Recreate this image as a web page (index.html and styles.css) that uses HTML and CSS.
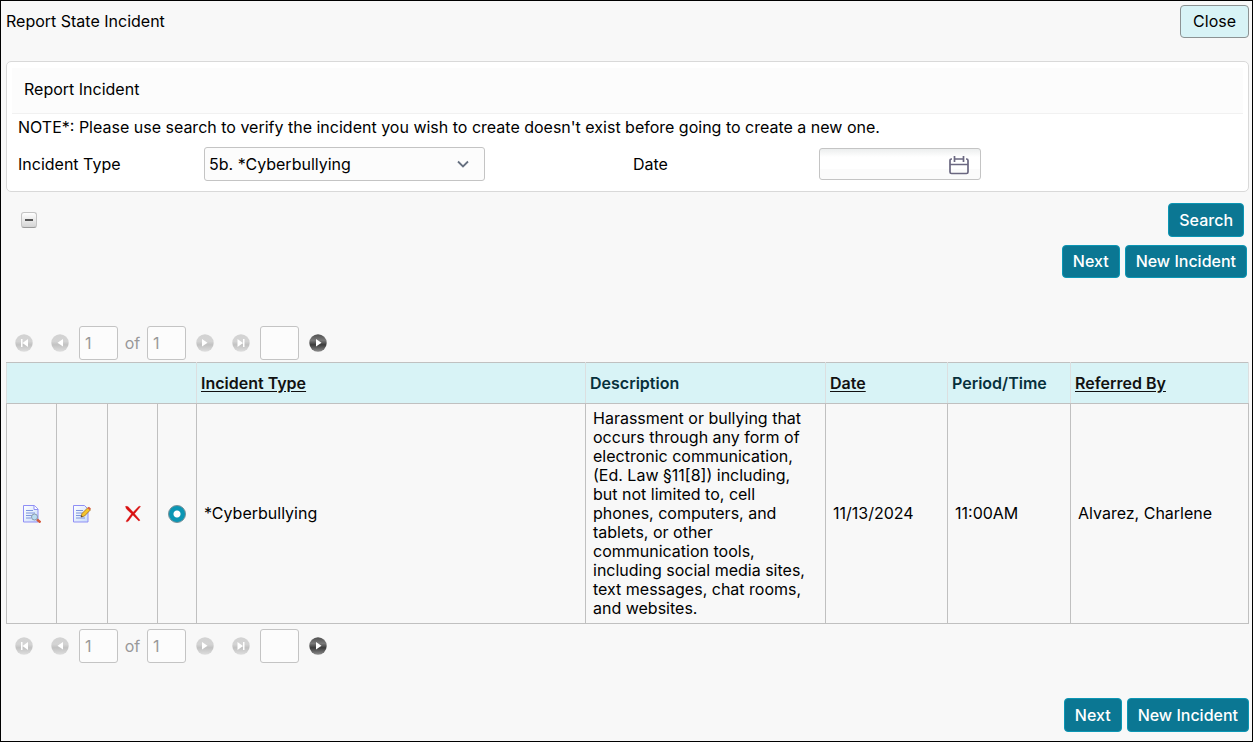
FILE: index.html
```html
<!DOCTYPE html>
<html lang="en">
<head>
<meta charset="utf-8">
<title>Report State Incident</title>
<link rel="stylesheet" href="styles.css">
</head>
<body>
<svg class="defs" aria-hidden="true">
  <defs>
    <linearGradient id="pale" x1="0" y1="0" x2="0" y2="1"><stop offset="0" stop-color="#d2d2d2"/><stop offset=".4" stop-color="#d4d4d4"/><stop offset=".6" stop-color="#c2c2c2"/><stop offset="1" stop-color="#dedede"/></linearGradient>
    <linearGradient id="dark" x1="0" y1="0" x2="0" y2="1"><stop offset="0" stop-color="#505050"/><stop offset=".35" stop-color="#7a7a7a"/><stop offset=".6" stop-color="#3c3c3c"/><stop offset="1" stop-color="#8c8c8c"/></linearGradient>
    <linearGradient id="sheet" x1="0" y1="0" x2="1" y2="1"><stop offset="0" stop-color="#fff"/><stop offset="1" stop-color="#c9dcfb"/></linearGradient>
    <symbol id="first" viewBox="0 0 18 18"><circle cx="9" cy="9" r="8.7" fill="url(#pale)"/><path d="M6 5h1.500v8H6zM13 5v8L7.500 9z" fill="#fff"/></symbol>
    <symbol id="prev" viewBox="0 0 18 18"><circle cx="9" cy="9" r="8.7" fill="url(#pale)"/><path d="M12 5v7.500L6.500 8.800z" fill="#fff"/></symbol>
    <symbol id="next" viewBox="0 0 18 18"><circle cx="9" cy="9" r="8.7" fill="url(#pale)"/><path d="M6 5v7.500L11.500 8.800z" fill="#fff"/></symbol>
    <symbol id="last" viewBox="0 0 18 18"><circle cx="9" cy="9" r="8.7" fill="url(#pale)"/><path d="M11 5h1.500v8H11zM5.500 5v8L11 9z" fill="#fff"/></symbol>
    <symbol id="go" viewBox="0 0 18 18"><circle cx="9" cy="9" r="8.7" fill="url(#dark)"/><path d="M7 5v7.500L12.500 8.800z" fill="#fff"/></symbol>
  </defs>
</svg>
<main class="page">
  <header class="top">
    <h1 class="title">Report State Incident</h1>
    <button class="btn btn-light" type="button">Close</button>
  </header>

  <section class="panel">
    <h2 class="panel-title">Report Incident</h2>
    <p class="note">NOTE*: Please use search to verify the incident you wish to create doesn't exist before going to create a new one.</p>
    <div class="fields">
      <label for="type">Incident Type</label>
      <div class="select-wrap">
        <select id="type" class="select"><option>5b. *Cyberbullying</option></select>
        <svg class="chevron" viewBox="0 0 12 8" aria-hidden="true"><path d="M1 1.500l5 5 5-5" fill="none" stroke="#667080" stroke-width="1.800"/></svg>
      </div>
      <label for="date">Date</label>
      <div class="date-wrap">
        <input id="date" class="date" type="text">
        <svg class="calendar" viewBox="0 0 20 20" aria-hidden="true"><path d="M3 4H2.500a1.500 1.500 0 0 0-1.500 1.500v11.500A1.500 1.500 0 0 0 2.500 18.500h15a1.500 1.500 0 0 0 1.500-1.500v-11.500A1.500 1.500 0 0 0 17.500 4h-.5M5.500 1v6M14.500 1v6M5.500 4h9M1.500 9.500h17" fill="none" stroke="#6a6780" stroke-width="1.700"/></svg>
      </div>
    </div>
  </section>

  <div class="search-row">
    <button class="collapse" type="button" aria-label="Collapse"></button>
    <button class="btn btn-tall" type="button">Search</button>
  </div>
  <div class="actions">
    <button class="btn" type="button">Next</button>
    <button class="btn" type="button">New Incident</button>
  </div>

  <nav class="pager" aria-label="Pages, top">
    <button class="icon-btn" type="button" aria-label="First page"><svg><use href="#first"/></svg></button>
    <button class="icon-btn" type="button" aria-label="Previous page"><svg><use href="#prev"/></svg></button>
    <span class="count"><input class="num" type="text" value="1" aria-label="Current page" disabled><span class="of">of</span><input class="num" type="text" value="1" aria-label="Page count" disabled></span>
    <button class="icon-btn" type="button" aria-label="Next page"><svg><use href="#next"/></svg></button>
    <button class="icon-btn" type="button" aria-label="Last page"><svg><use href="#last"/></svg></button>
    <input class="num" type="text" aria-label="Go to page">
    <button class="icon-btn" type="button" aria-label="Go"><svg><use href="#go"/></svg></button>
  </nav>

  <table class="grid">
    <colgroup><col class="c-view"><col class="c-edit"><col class="c-delete"><col class="c-radio"><col><col class="c-desc"><col class="c-date"><col class="c-time"><col class="c-ref"></colgroup>
    <thead>
      <tr><th colspan="4"></th><th><a href="#">Incident Type</a></th><th>Description</th><th><a href="#">Date</a></th><th>Period/Time</th><th><a href="#">Referred By</a></th></tr>
    </thead>
    <tbody>
      <tr>
        <td class="tool"><button class="icon-btn" type="button" aria-label="View"><svg viewBox="0 0 18 18"><path d="M.5 .5h11l3.500 3.500v13H.5z" fill="url(#sheet)" stroke="#8f8ff5"/><path d="M11 .5v4h4" fill="#fff" stroke="#8f8ff5"/><path d="M3 5.500h7M3 8h9M3 10.500h6M3 13h5" stroke="#7f96dc"/><circle cx="11.500" cy="12" r="3" fill="#b9dcf2" stroke="#8b9aab"/><path d="M14 14.500l3.500 3" stroke="#d4583c" stroke-width="2.400"/></svg></button></td>
        <td class="tool"><button class="icon-btn" type="button" aria-label="Edit"><svg viewBox="0 0 18 18"><path d="M.5 .5h11l3.500 3.500v13H.5z" fill="url(#sheet)" stroke="#8f8ff5"/><path d="M3 5.500h7M3 8h7M3 10.500h5M3 13h9" stroke="#7f96dc"/><path d="M8 12l1-3.500 6-6 2.500 2.300-6 6.200z" fill="#f5c52c" stroke="#a36b1c" stroke-width=".8"/><path d="M14.500 3l1.500-1.300 2 2L16.500 5z" fill="#d65a48"/><path d="M8 12l.5-1.700 1.200 1.200z" fill="#333"/></svg></button></td>
        <td class="tool"><button class="icon-btn" type="button" aria-label="Delete"><svg viewBox="0 0 18 18"><path d="M1.500 1.500c2-.5 3 .5 4 1.700l3.700 4 5.800-6 1.500.3-6 7.200 5.500 6.500-1.200.8-6-6-4.300 6c-1 1-2 1-2.500.3l5.500-7.600-5-4.700z" fill="#d90f0f" stroke="#d90f0f" stroke-width=".4"/></svg></button></td>
        <td class="tool"><input class="radio" type="radio" name="incident" aria-label="Select incident" checked></td>
        <td>*Cyberbullying</td>
        <td>Harassment or bullying that occurs through any form of electronic communication, (Ed. Law §11[8]) including, but not limited to, cell phones, computers, and tablets, or other communication tools, including social media sites, text messages, chat rooms, and websites.</td>
        <td>11/13/2024</td>
        <td>11:00AM</td>
        <td>Alvarez, Charlene</td>
      </tr>
    </tbody>
  </table>

  <nav class="pager pager-bottom" aria-label="Pages, bottom">
    <button class="icon-btn" type="button" aria-label="First page"><svg><use href="#first"/></svg></button>
    <button class="icon-btn" type="button" aria-label="Previous page"><svg><use href="#prev"/></svg></button>
    <span class="count"><input class="num" type="text" value="1" aria-label="Current page" disabled><span class="of">of</span><input class="num" type="text" value="1" aria-label="Page count" disabled></span>
    <button class="icon-btn" type="button" aria-label="Next page"><svg><use href="#next"/></svg></button>
    <button class="icon-btn" type="button" aria-label="Last page"><svg><use href="#last"/></svg></button>
    <input class="num" type="text" aria-label="Go to page">
    <button class="icon-btn" type="button" aria-label="Go"><svg><use href="#go"/></svg></button>
  </nav>

  <footer class="actions actions-bottom">
    <button class="btn btn-tall" type="button">Next</button>
    <button class="btn btn-tall" type="button">New Incident</button>
  </footer>
</main>
</body>
</html>
```

FILE: styles.css
```css
*, *::before, *::after { box-sizing: border-box; }

body {
  margin: 0;
  background: #f8f8f8;
  color: #000;
  font: 16px/19px Inter, "Liberation Sans", sans-serif;
}

button, input, select { font: inherit; }

.defs { position: absolute; width: 0; height: 0; }

.page {
  min-height: 100vh;
  padding: 4px 3px 8px 5px;
  border: 1px solid #000;
}

.top {
  display: flex;
  justify-content: space-between;
  align-items: center;
}

.title, .panel-title { margin: 0; font-size: 16px; font-weight: 400; }

.btn {
  height: 33px;
  padding: 0 10px;
  border: 1px solid #0b96b4;
  border-radius: 4px;
  background: #0b7793;
  color: #fff;
  font-weight: 500;
}

.btn-tall { height: 34px; }

.btn-light {
  padding: 0 12px;
  border-color: #8c9293;
  background: #d8f3f6;
  color: #000;
  font-weight: 400;
}

.panel {
  margin-top: 23px;
  padding: 6px 5px 10px;
  border: 1px solid #d9d9d9;
  border-radius: 5px;
  background: #fff;
}

.panel-title {
  padding: 12px 12px 14px;
  border-bottom: 1px solid #f1f1f1;
  background: #fcfcfc;
}

.note { margin: 4px 6px 10px; }

.fields {
  display: grid;
  grid-template-columns: 186px 1fr 186px 1fr;
  align-items: center;
  margin: 0 -5px 0 6px;
}

.select-wrap { position: relative; width: 281px; }

.select {
  display: block;
  width: 100%;
  height: 34px;
  padding: 0 4px;
  border: 1px solid #c4c4c4;
  border-radius: 3px;
  background: #fcfcfc;
  color: #000;
  appearance: none;
}

.chevron {
  position: absolute;
  top: 13px;
  right: 16px;
  width: 12px;
  height: 8px;
  pointer-events: none;
}

.date-wrap { position: relative; width: 162px; }

.date {
  display: block;
  width: 100%;
  height: 32px;
  border: 1px solid #c4c4c4;
  border-radius: 3px;
  background: linear-gradient(#eceeee, #fff 8px, #fff 20px, #fbfbfb 20px);
}

.calendar {
  position: absolute;
  top: 7px;
  right: 12px;
  width: 20px;
  height: 20px;
}

.search-row {
  display: flex;
  justify-content: space-between;
  align-items: center;
  margin: 11px 5px 8px 15px;
}

.collapse {
  display: grid;
  place-items: center;
  width: 16px;
  height: 16px;
  padding: 0;
  border: 1px solid #c4c4c4;
  border-bottom-color: #999;
  border-radius: 3px;
  background: linear-gradient(#fff, #d4d4d4);
}

.collapse::before {
  content: "";
  width: 8px;
  height: 2px;
  background: #555;
}

.actions {
  display: flex;
  justify-content: flex-end;
  gap: 5px;
  padding-right: 2px;
}

.actions-bottom { margin-top: 33px; padding-right: 0; }

.pager {
  display: flex;
  align-items: center;
  gap: 18px;
  margin-top: 48px;
  padding: 0 9px 2px;
  color: #999;
}

.pager-bottom { margin-top: 5px; }

.icon-btn {
  display: block;
  width: 18px;
  height: 18px;
  padding: 0;
  border: 0;
  background: none;
}

.icon-btn svg { display: block; width: 18px; height: 18px; }

.count { display: flex; align-items: center; margin: 0 -8px; }

.of { width: 29px; text-align: center; }

.num {
  width: 39px;
  height: 34px;
  padding: 0 5px;
  border: 1px solid #c4c4c4;
  border-radius: 3px;
  background: #fcfcfc;
  color: #999;
}

.pager > .num { margin: 0 -8px; }

.grid {
  width: 100%;
  border-collapse: collapse;
  table-layout: fixed;
}

.c-view, .c-delete { width: 50px; }
.c-edit { width: 51px; }
.c-radio { width: 39px; }
.c-desc { width: 240px; }
.c-date { width: 122px; }
.c-time { width: 123px; }
.c-ref { width: 178px; }

.grid th {
  height: 41px;
  padding: 0 4px;
  border: 1px solid #dcdfe0;
  border-top-color: #c0c0c0;
  border-bottom-color: #c0c0c0;
  background: #d8f3f6;
  color: #07303c;
  font-weight: 600;
  text-align: left;
}

.grid th a { color: #111; text-underline-offset: 2px; }

.grid td { padding: 5px 7px; border: 1px solid #c0c0c0; }

.grid .tool { padding: 0; }
.tool > * { margin: 0 auto; }

.radio {
  display: block;
  width: 18px;
  height: 18px;
  border: 1px solid #7b9299;
  border-radius: 50%;
  background: radial-gradient(circle, #fff 3px, #0b96b4 4px);
  appearance: none;
}
```
